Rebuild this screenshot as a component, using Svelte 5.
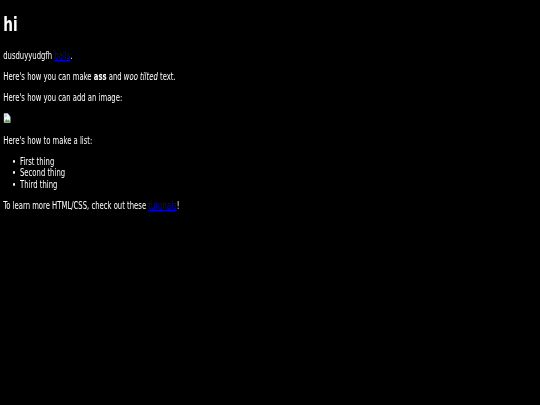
<script>
let items = ['First thing', 'Second thing', 'Third thing'];
</script>

<div class="page">
  <main>
    <h1>hi</h1>
    <p>dusduyyudgfh <a href="#balls">balls</a>.</p>
    <p>Here's how you can make <strong>ass</strong> and <em>woo tilted</em> text.</p>
    <p>Here's how you can add an image:</p>
    <p class="pic">
      <svg width="10" height="10" viewBox="0 0 10 10">
        <path d="M0.5 0.5H6L9.5 4V9.5H0.5Z" fill="#eef2f4" stroke="#c4cacc" stroke-width="0.6" />
        <path d="M1 9L4 6L5.5 7.5L7 6.5L9 8.5V9Z" fill="#5aa84a" />
        <path d="M1.5 1.5H4.5V4H1.5Z" fill="#b4cce8" />
      </svg>
    </p>
    <p>Here's how to make a list:</p>
    <ul>
      {#each items as item}
        <li>{item}</li>
      {/each}
    </ul>
    <p>To learn more HTML/CSS, check out these <a href="#tutorials">tutorials</a>!</p>
  </main>
</div>

<style>
:global(body) {
  margin: 0;
  background: #000;
}

.page {
  height: 405px;
  overflow: hidden;
  background: #000;
}

main {
  /* the whole page is squeezed sideways in the reference */
  width: 755px;
  padding: 13px 4.5px 0;
  box-sizing: border-box;
  transform: scaleX(0.715);
  transform-origin: 0 0;
  filter: blur(0.45px);
  color: #fff;
  font-family: "DejaVu Sans", sans-serif;
  font-size: 9.6px;
  line-height: 11.5px;
}

h1 {
  margin: 0 0 14px;
  font-size: 19px;
  line-height: 23px;
  font-weight: bold;
}

p {
  margin: 0 0 9.7px;
}

.pic {
  height: 12.3px;
}

svg {
  display: block;
  margin-top: -1px;
}

ul {
  margin: 0 0 9.7px;
  padding: 0 0 0 12.3px;
  list-style: none;
}

li::before {
  content: "•";
  display: inline-block;
  width: 11.2px;
}

a {
  color: #0000cc;
}
</style>
